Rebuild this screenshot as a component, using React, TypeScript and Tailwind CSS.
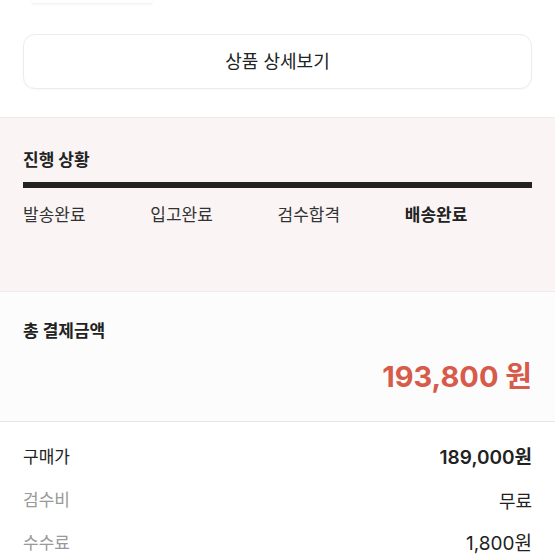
import React from "react";

const steps = ["발송완료", "입고완료", "검수합격", "배송완료"];

export default function App() {
    return (
        <div className="w-[555px] h-[555px] overflow-hidden bg-white text-[#222] font-['Inter','Noto_Sans_CJK_KR',sans-serif]">
            <div className="px-[23px]">
                <div className="w-[122px] h-[3px] ml-[8px] rounded-b-lg bg-white shadow-[0_1px_3px_rgba(0,0,0,0.08)]" />
                <button className="mt-[31px] w-full h-[55px] rounded-xl border border-[#ececec] bg-white text-[18px] text-[#222] shadow-[0_1px_2px_rgba(0,0,0,0.03)]">
                    상품 상세보기
                </button>
            </div>

            <section className="mt-[28px] border-t border-[#ececec] bg-[#faf5f4] px-[23px] pt-[31px] h-[174px]">
                <h3 className="text-[17px] font-bold leading-[22px]">진행 상황</h3>
                <div className="mt-[11px] h-[6px] bg-[#222]" />
                <div className="mt-[16px] grid grid-cols-4 text-[17px] leading-[22px]">
                    {steps.map((s, i) => (
                        <span key={s} className={i === 3 ? "font-bold" : "text-[#333]"}>
                            {s}
                        </span>
                    ))}
                </div>
            </section>

            <section className="border-t border-[#ececec] bg-[#fcfcfc] px-[23px] pt-[28px] h-[130px]">
                <h3 className="text-[17px] font-bold leading-[22px]">총 결제금액</h3>
                <p className="mt-[17px] text-right text-[29px] font-bold leading-[36px] text-[#d65b4a]">
                    193,800 원
                </p>
            </section>

            <section className="border-t border-[#e6e6e6] px-[23px] pt-[24px] text-[17px]">
                <div className="flex items-center justify-between h-[24px]">
                    <span>구매가</span>
                    <span className="text-[19px] font-semibold">189,000원</span>
                </div>
                <div className="mt-[19px] flex items-center justify-between h-[24px]">
                    <span className="text-[#999]">검수비</span>
                    <span className="text-[18px]">무료</span>
                </div>
                <div className="mt-[19px] flex items-center justify-between h-[24px]">
                    <span className="text-[#999]">수수료</span>
                    <span className="text-[19px]">1,800원</span>
                </div>
            </section>
        </div>
    );
}
